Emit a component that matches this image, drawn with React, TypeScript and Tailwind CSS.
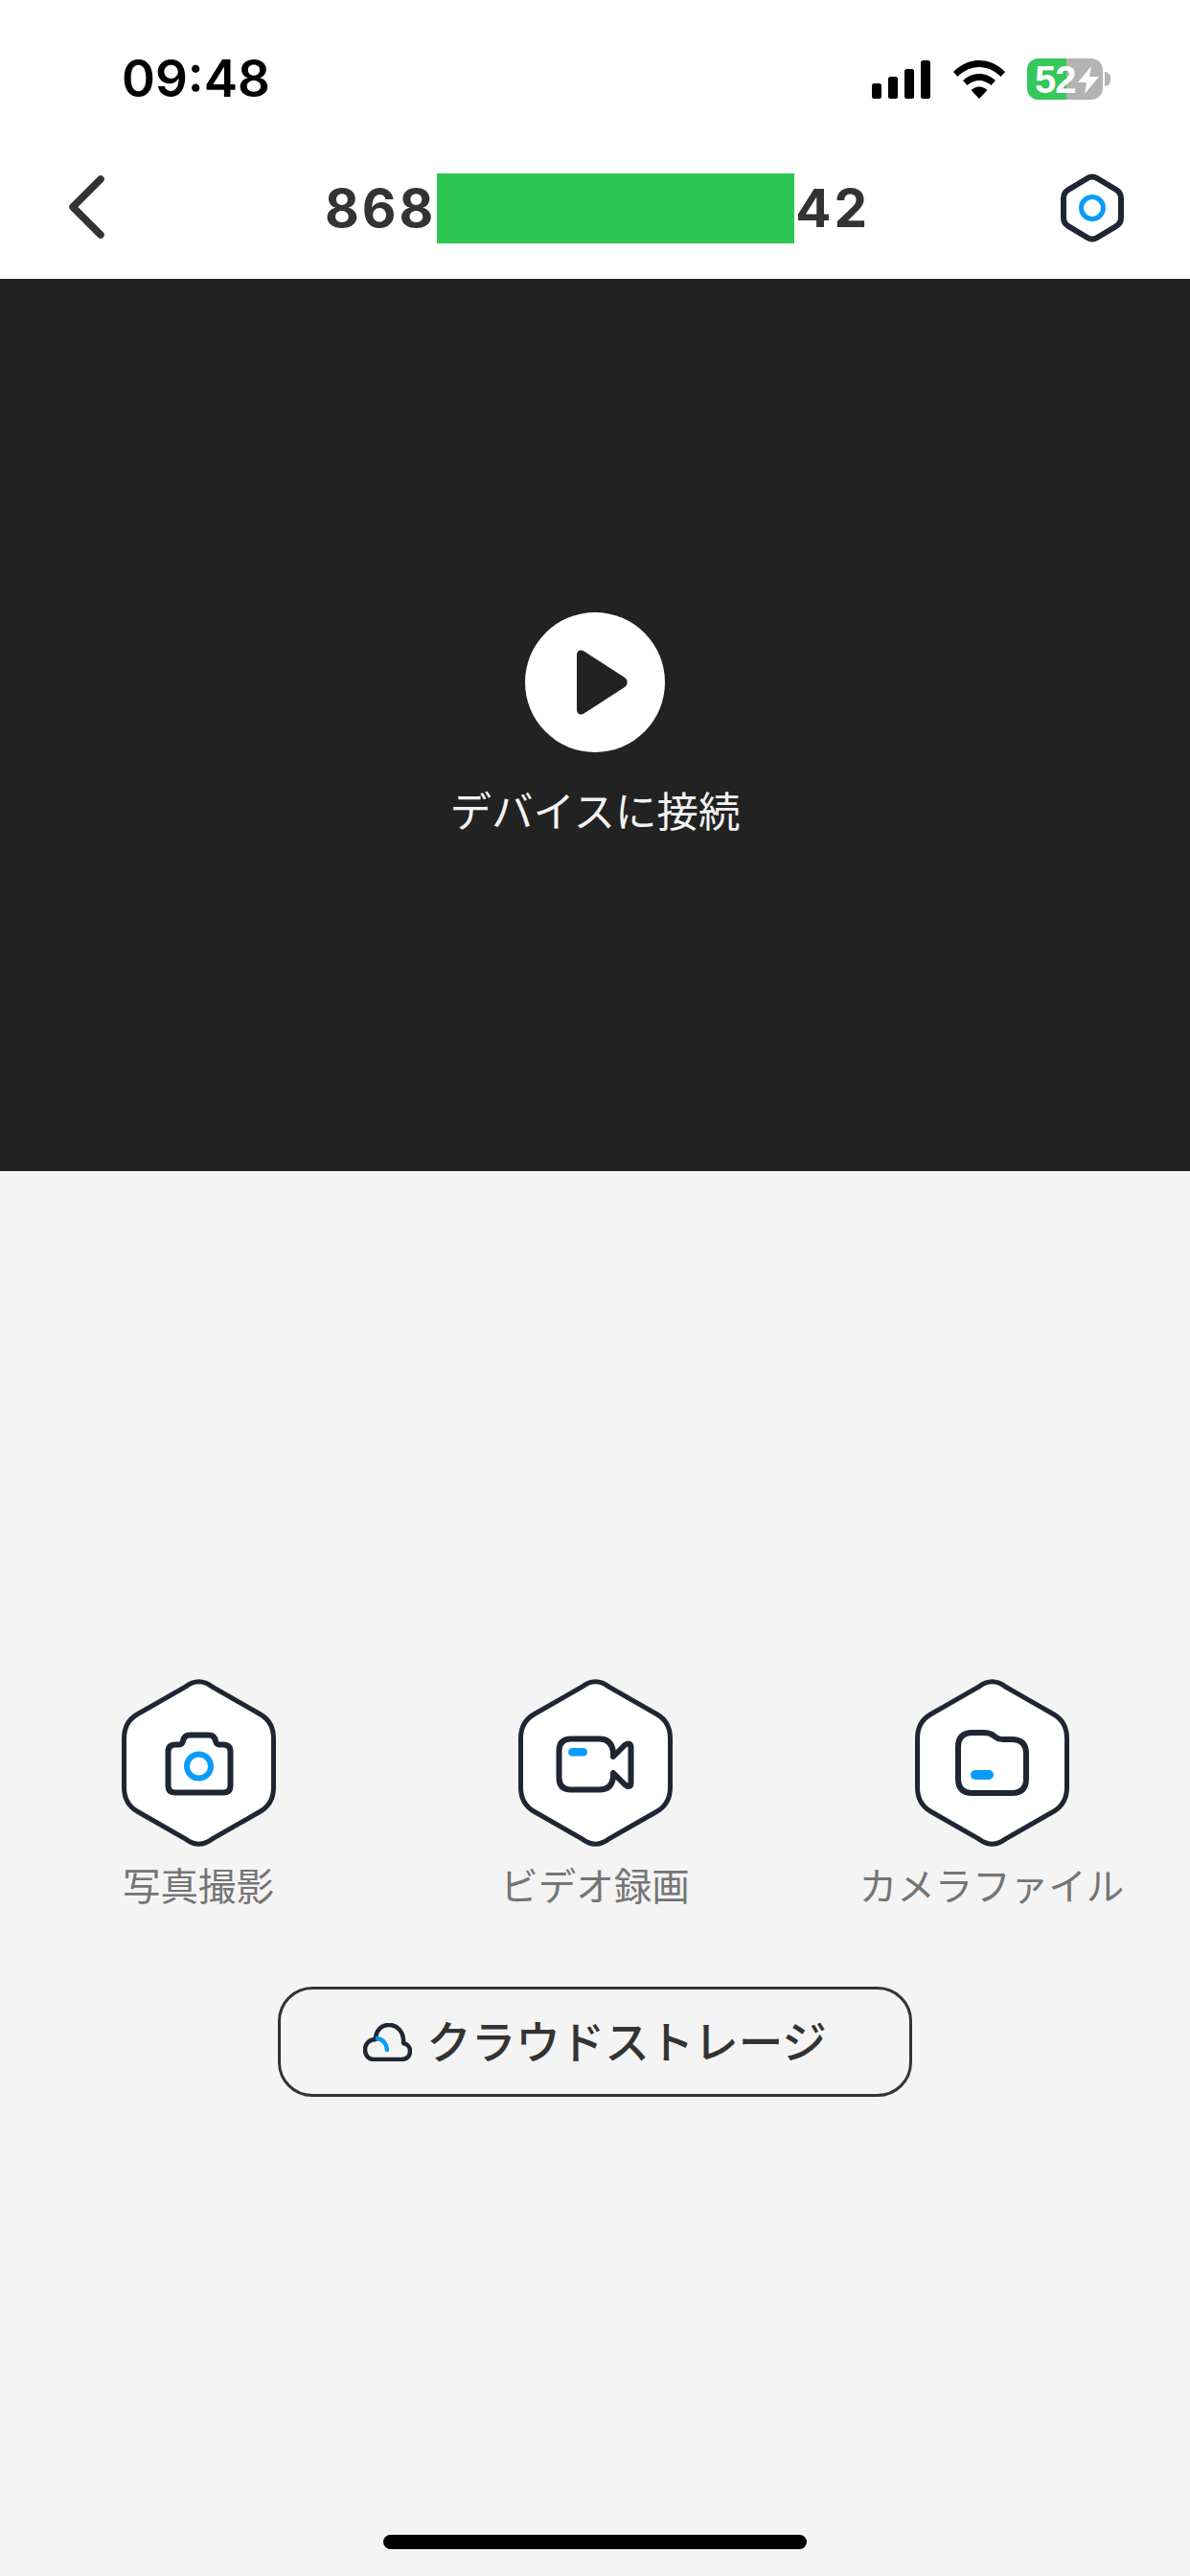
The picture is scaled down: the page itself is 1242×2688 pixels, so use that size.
const JP = "font-['Inter','Noto_Sans_CJK_JP',sans-serif]";

function Hexagon({ children }: { children: React.ReactNode }) {
  return (
    <svg width="161" height="175" viewBox="0 0 161 175" fill="none">
      <path
        d="M66 8.500Q80.500 -3 95 8.500L145 37Q158.500 45 158.500 62L158.500 113Q158.500 130 145 138L95 166.500Q80.500 178 66 166.500L16 138Q2.500 130 2.500 113L2.500 62Q2.500 45 16 37Z"
        fill="#ffffff"
        stroke="#1f2633"
        strokeWidth="5"
      />
      {children}
    </svg>
  );
}

function Action({ label, children }: { label: string; children: React.ReactNode }) {
  return (
    <div className="flex flex-col items-center">
      <Hexagon>{children}</Hexagon>
      <span className={`mt-[18px] text-[39.500px] leading-[48px] text-[#757575] whitespace-nowrap ${JP}`}>{label}</span>
    </div>
  );
}

function StatusIcons() {
  return (
    <div className="flex items-center">
      <svg width="62" height="40" viewBox="0 0 62 40" fill="#000000">
        <rect x="0" y="24" width="10" height="16" rx="2.5" />
        <rect x="17" y="17" width="10" height="23" rx="2.5" />
        <rect x="34" y="9" width="10" height="31" rx="2.5" />
        <rect x="51" y="0" width="10" height="40" rx="2.5" />
      </svg>
      <svg className="ml-[23px]" width="54" height="40" viewBox="0 0 54 40" fill="#000000">
        <path d="M27 0C17 0 8 4 0 12L4.500 17C11 10.500 19 7 27 7S43 10.500 49.500 17L54 12C46 4 37 0 27 0Z" />
        <path d="M27 14C21 14 15 16.500 10 21L14.500 26C18 23 22.500 21 27 21S36 23 39.500 26L44 21C39 16.500 33 14 27 14Z" />
        <path d="M27 27.500C24 27.500 21 28.700 18.500 31L27 40L35.500 31C33 28.700 30 27.500 27 27.500Z" />
      </svg>
      <div className="ml-[23px] relative w-[79px] h-[43px] rounded-[12px] bg-[#b3b3b3] flex">
        <div className="w-[41px] h-full rounded-l-[12px] bg-[#34c759]" />
        <span className="absolute left-[8px] top-0 h-full flex items-center font-['Liberation_Sans',sans-serif] font-bold text-[40px] leading-none tracking-[-1px] text-white">
          52
        </span>
        <svg className="absolute left-[53px] top-[8px]" width="22" height="29" viewBox="0 0 22 29" fill="#ffffff">
          <path d="M14 0L0 17H9L7 29L22 11H12Z" />
        </svg>
      </div>
      <div className="ml-[2px] w-[6px] h-[15px] rounded-r-full bg-[#b3b3b3]" />
    </div>
  );
}

export default function App() {
  return (
    <div className="w-[1242px] h-[2688px] flex flex-col bg-[#f4f4f4]">
      <div className="h-[150px] bg-white flex items-start justify-between pl-[127px] pr-[83px] pt-[61px]">
        <span className="font-['Inter',sans-serif] font-semibold text-[53px] leading-[43px] text-black">09:48</span>
        <StatusIcons />
      </div>

      <div className="h-[141px] bg-white relative flex items-center justify-center pb-[6px] pl-[5px]">
        <svg className="absolute left-[67px] top-[32px]" width="44" height="68" viewBox="0 0 44 68" fill="none">
          <path d="M38 5L9 34L38 63" stroke="#333333" strokeWidth="7.500" strokeLinecap="round" strokeLinejoin="round" />
        </svg>
        <div className="flex items-center font-['Inter',sans-serif] font-bold text-[55px] leading-none tracking-[3px] text-[#333333]">
          <span>868</span>
          <div className="ml-[1px] w-[373px] h-[73px] bg-[#2dc653]" />
          <span className="ml-[1px]">42</span>
        </div>
        <svg className="absolute left-[1106px] top-[31px]" width="68" height="72" viewBox="0 0 68 72" fill="none">
          <path
            d="M29 5Q34 2 39 5L59 17Q64 20 64 26V46Q64 52 59 55L39 67Q34 70 29 67L9 55Q4 52 4 46V26Q4 20 9 17Z"
            fill="#ffffff"
            stroke="#1f2633"
            strokeWidth="6"
            strokeLinejoin="round"
          />
          <circle cx="34" cy="36" r="11.500" stroke="#0a9bfa" strokeWidth="5" />
        </svg>
      </div>

      <div className="h-[931px] bg-[#222222] flex flex-col items-center pt-[348px]">
        <div className="w-[146px] h-[146px] rounded-full bg-white flex items-center justify-center">
          <svg className="ml-[13px]" width="54" height="68" viewBox="0 0 54 68" fill="#222222">
            <path d="M1 5C1 1 5 -1 8.500 1.500L51 29C54.500 31.500 54.500 36.500 51 39L8.500 66.500C5 69 1 67 1 63Z" />
          </svg>
        </div>
        <span className={`mt-[36px] text-[43.500px] leading-[52px] text-[#f2f2f2] ${JP}`}>デバイスに接続</span>
      </div>

      <div className="flex-1 flex flex-col items-center pt-[530px]">
        <div className="w-full grid grid-cols-3">
          <Action label="写真撮影">
            <path
              d="M56 68.500H60Q63 68.500 64 65Q65 58.500 71 58.500H91Q97 58.500 98 65Q99 68.500 102 68.500H106Q113.500 68.500 113.500 76V111Q113.500 118.500 106 118.500H56Q48.500 118.500 48.500 111V76Q48.500 68.500 56 68.500Z"
              stroke="#1f2633"
              strokeWidth="6"
              strokeLinejoin="round"
            />
            <circle cx="80.500" cy="91" r="12.500" stroke="#0a9bfa" strokeWidth="6" />
          </Action>
          <Action label="ビデオ録画">
            <path
              d="M55 62.500H85Q97 62.500 99 76V81L111 69Q117.500 65 117.500 72V108Q117.500 115 111 110L99 98V103Q97 115.500 85 115.500H55Q42.500 115.500 42.500 103V75Q42.500 62.500 55 62.500Z"
              stroke="#1f2633"
              strokeWidth="6"
              strokeLinejoin="round"
            />
            <rect x="52" y="72" width="20" height="8.500" rx="4.250" fill="#0a9bfa" />
          </Action>
          <Action label="カメラファイル">
            <path
              d="M60 56H72Q78 56 82 59Q86 63 92 63H101Q116 63 116 78V104Q116 119 101 119H60Q45 119 45 104V71Q45 56 60 56Z"
              stroke="#1f2633"
              strokeWidth="6"
              strokeLinejoin="round"
            />
            <rect x="58" y="95" width="24" height="10" rx="5" fill="#0a9bfa" />
          </Action>
        </div>

        <div className="mt-[80px] w-[662px] h-[115px] rounded-[36px] border-[3px] border-[#333333] flex items-center justify-center gap-[15px]">
          <svg width="51" height="40" viewBox="0 0 51 40" fill="none">
            <path
              d="M11 38H40C46 38 49 34 49 29C49 25 46 22 42 21C43 10 36 2 27 2C18 2 13 9 13 17C6 17 2 22 2 28C2 34 6 38 11 38Z"
              stroke="#1f2633"
              strokeWidth="4.500"
              strokeLinejoin="round"
            />
            <path d="M15 16Q24 18 25 28" stroke="#0a9bfa" strokeWidth="4.500" strokeLinecap="round" />
          </svg>
          <span className={`text-[46.500px] leading-[56px] font-medium text-[#333333] whitespace-nowrap ${JP}`}>クラウドストレージ</span>
        </div>

        <div className="mt-auto mb-[28px] w-[442px] h-[15px] rounded-full bg-black" />
      </div>
    </div>
  );
}
